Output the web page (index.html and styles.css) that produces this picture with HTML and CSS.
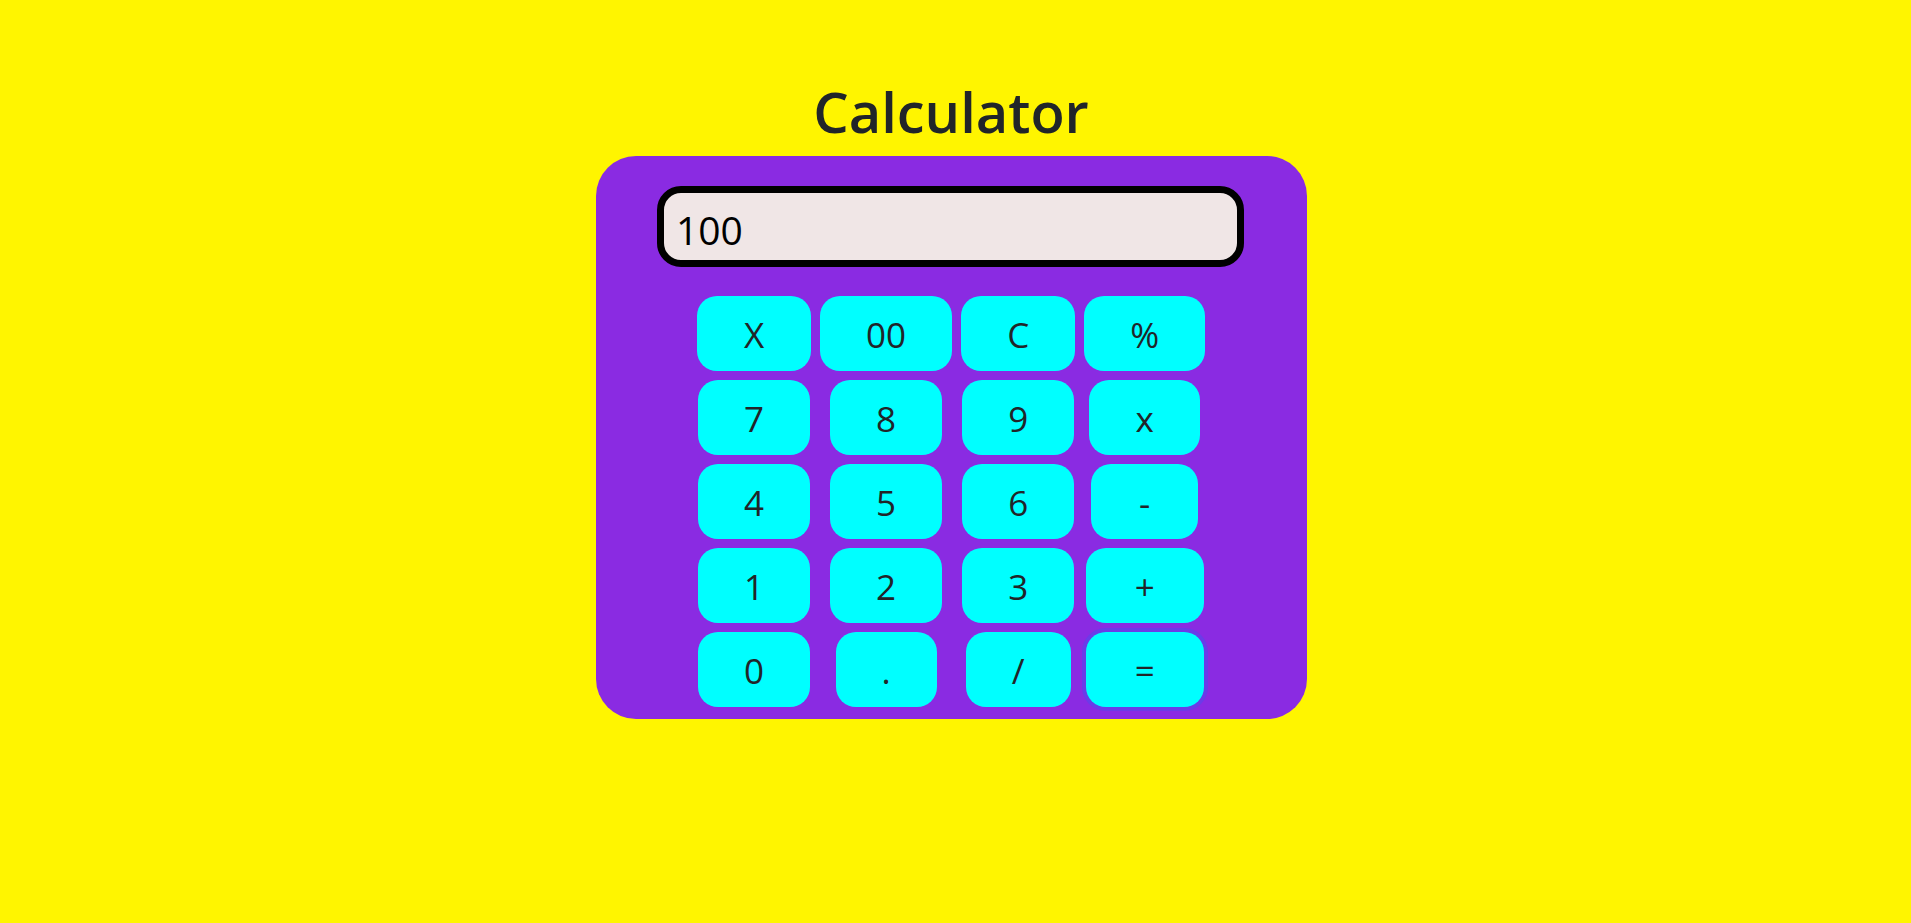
FILE: index.html
```html
<!DOCTYPE html>
<html lang="en">
<head>
<meta charset="utf-8">
<title>Calculator</title>
<link rel="stylesheet" href="styles.css">
</head>
<body>
<main class="page">
  <h1 class="title">Calculator</h1>
  <section class="calc">
    <div class="display">100</div>
    <div class="keys">
      <button class="key key--x">X</button>
      <button class="key">00</button>
      <button class="key">C</button>
      <button class="key">%</button>

      <button class="key">7</button>
      <button class="key">8</button>
      <button class="key">9</button>
      <button class="key">x</button>

      <button class="key">4</button>
      <button class="key">5</button>
      <button class="key">6</button>
      <button class="key key--minus">-</button>

      <button class="key">1</button>
      <button class="key">2</button>
      <button class="key">3</button>
      <button class="key key--wide">+</button>

      <button class="key">0</button>
      <button class="key">.</button>
      <button class="key">/</button>
      <button class="key key--wide key--focus">=</button>
    </div>
  </section>
</main>
</body>
</html>
```

FILE: styles.css
```css
html, body {
  margin: 0;
  padding: 0;
}

body {
  background: #fff500;
  color: #212529;
  font-family: "Open Sans", "Noto Sans", sans-serif;
  min-height: 923px;
}

.page {
  display: flex;
  flex-direction: column;
  align-items: center;
  padding: 77px 9px 0 0;
}

.title {
  margin: 0 0 11px;
  font-size: 56px;
  font-weight: 600;
  line-height: 68px;
  color: #212529;
}

.calc {
  width: 711px;
  box-sizing: border-box;
  background: #8a2be2;
  border-radius: 40px;
  padding: 30px 0 12px;
  display: flex;
  flex-direction: column;
  align-items: center;
}

.display {
  box-sizing: border-box;
  width: 587px;
  height: 81px;
  border: 7px solid #000;
  border-radius: 24px;
  background: #f0e6e6;
  color: #000;
  font-size: 39px;
  line-height: 59px;
  padding: 7px 12px 0;
  text-align: left;
  margin-left: -1px;
}

.keys {
  margin-top: 29px;
  display: grid;
  grid-template-columns: repeat(4, auto);
  column-gap: 9px;
  row-gap: 9px;
  justify-items: center;
}

.key {
  box-sizing: border-box;
  height: 75px;
  padding: 3px 46px 0;
  border: 0;
  border-radius: 20px;
  background: #00ffff;
  color: #212529;
  font-family: "Open Sans", "Noto Sans", sans-serif;
  font-size: 35px;
  line-height: 72px;
  cursor: pointer;
}

.key--x {
  padding-left: 47px;
  padding-right: 47px;
}

.key--minus {
  padding-left: 48px;
  padding-right: 48px;
}

.key--wide {
  padding-left: 49px;
  padding-right: 49px;
}

.key--focus {
  box-shadow: 0 0 0 4px rgba(13, 110, 253, 0.25);
}
```
